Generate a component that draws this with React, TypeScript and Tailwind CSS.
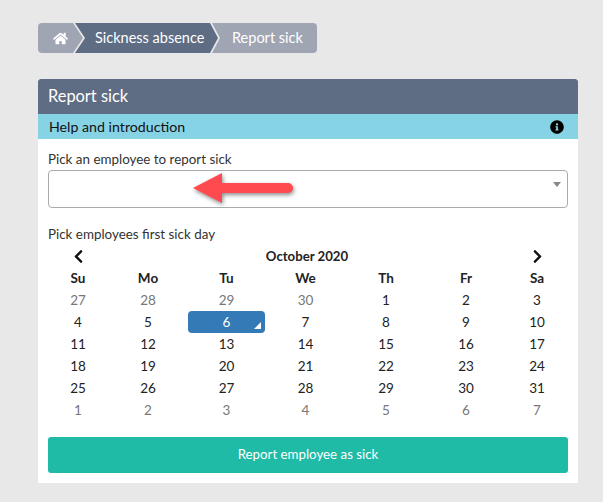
import { FaChevronLeft, FaChevronRight, FaHome, FaInfoCircle } from 'react-icons/fa';

const days = ['Su', 'Mo', 'Tu', 'We', 'Th', 'Fr', 'Sa'];

// [label, muted]
const cells: [number, boolean][] = [
  [27, true], [28, true], [29, true], [30, true], [1, false], [2, false], [3, false],
  [4, false], [5, false], [6, false], [7, false], [8, false], [9, false], [10, false],
  [11, false], [12, false], [13, false], [14, false], [15, false], [16, false], [17, false],
  [18, false], [19, false], [20, false], [21, false], [22, false], [23, false], [24, false],
  [25, false], [26, false], [27, false], [28, false], [29, false], [30, false], [31, false],
  [1, true], [2, true], [3, true], [4, true], [5, true], [6, true], [7, true],
];

function Breadcrumb() {
  return (
    <nav className="flex h-[30px] w-fit text-[14.5px] text-white">
      <div className="flex w-[45px] items-center rounded-l bg-[#9fa5b3] pl-[15px] [clip-path:polygon(0_0,calc(100%-10px)_0,100%_50%,calc(100%-10px)_100%,0_100%)]">
        <FaHome className="text-[15px]" />
      </div>
      <div className="-ml-[8px] flex w-[143px] items-center bg-[#5e6c84] pl-[20px] [clip-path:polygon(0_0,calc(100%-8px)_0,100%_50%,calc(100%-8px)_100%,0_100%,10px_50%)]">
        Sickness absence
      </div>
      <div className="-ml-[6px] flex w-[105px] items-center rounded-r bg-[#9fa5b3] pl-[20px] [clip-path:polygon(0_0,100%_0,100%_100%,0_100%,8px_50%)]">
        Report sick
      </div>
    </nav>
  );
}

function Calendar() {
  return (
    <div className="mt-[2px] text-[13.5px] leading-[22px] text-[#222]">
      <div className="grid grid-cols-[60px_80px_77px_81px_80px_80px_62px] text-center">
        <div className="flex h-[22px] items-center justify-center text-[15px] text-[#111]">
          <FaChevronLeft />
        </div>
        <div className="col-span-5 text-[13.2px] font-bold">October 2020</div>
        <div className="flex h-[22px] items-center justify-center text-[15px] text-[#111]">
          <FaChevronRight />
        </div>
        {days.map((d) => (
          <div key={d} className="font-bold">
            {d}
          </div>
        ))}
        {cells.map(([n, muted], i) =>
          i === 9 ? (
            <div key={i} className="relative rounded bg-[#337ab7] text-white">
              {n}
              <span className="absolute right-1 bottom-1 border-b-[7px] border-l-[7px] border-b-white border-l-transparent" />
            </div>
          ) : (
            <div key={i} className={muted ? 'text-[#777]' : ''}>
              {n}
            </div>
          ),
        )}
      </div>
    </div>
  );
}

export default function App() {
  return (
    <div className="min-h-[502px] bg-[#e8e8e8] px-[38px] pt-[23px] font-['Lato','Noto_Sans',sans-serif]">
      <Breadcrumb />
      <section className="mt-[26px] w-[540px] bg-white">
        <h1 className="flex h-[35px] items-center rounded-t-[3px] bg-[#5e6c84] px-[10px] pb-[1px] text-[16.4px] text-white">
          Report sick
        </h1>
        <div className="flex h-[25px] items-center justify-between bg-[#87d3e6] pr-[14px] pl-[11px] text-[14.2px] text-[#111]">
          Help and introduction
          <FaInfoCircle className="text-[14px] text-black" />
        </div>
        <div className="px-[10px] pt-[12px] pb-[10px]">
          <label className="block text-[13.4px] leading-[17px] text-[#333]">
            Pick an employee to report sick
          </label>
          <div className="relative mt-[2px] h-[38px] rounded border border-[#aaa] bg-white">
            <span className="absolute top-[11px] right-[6px] border-x-[4px] border-t-[5px] border-x-transparent border-t-[#888]" />
            <svg
              className="absolute top-[2px] left-[139px] drop-shadow-[1px_2px_2px_rgba(0,0,0,0.45)]"
              width="110"
              height="36"
              viewBox="0 0 110 36"
              fill="none"
            >
              <path d="M5 15 L34 0 V10 H100 a5 5 0 0 1 0 10 H34 V30 Z" fill="#ff4a4f" />
            </svg>
          </div>
          <label className="mt-[18px] block text-[13.4px] leading-[17px] text-[#333]">
            Pick employees first sick day
          </label>
          <Calendar />
          <button className="mt-[16px] h-[36px] w-full rounded-[3px] bg-[#1fbba6] text-[13.3px] text-white">
            Report employee as sick
          </button>
        </div>
      </section>
    </div>
  );
}
